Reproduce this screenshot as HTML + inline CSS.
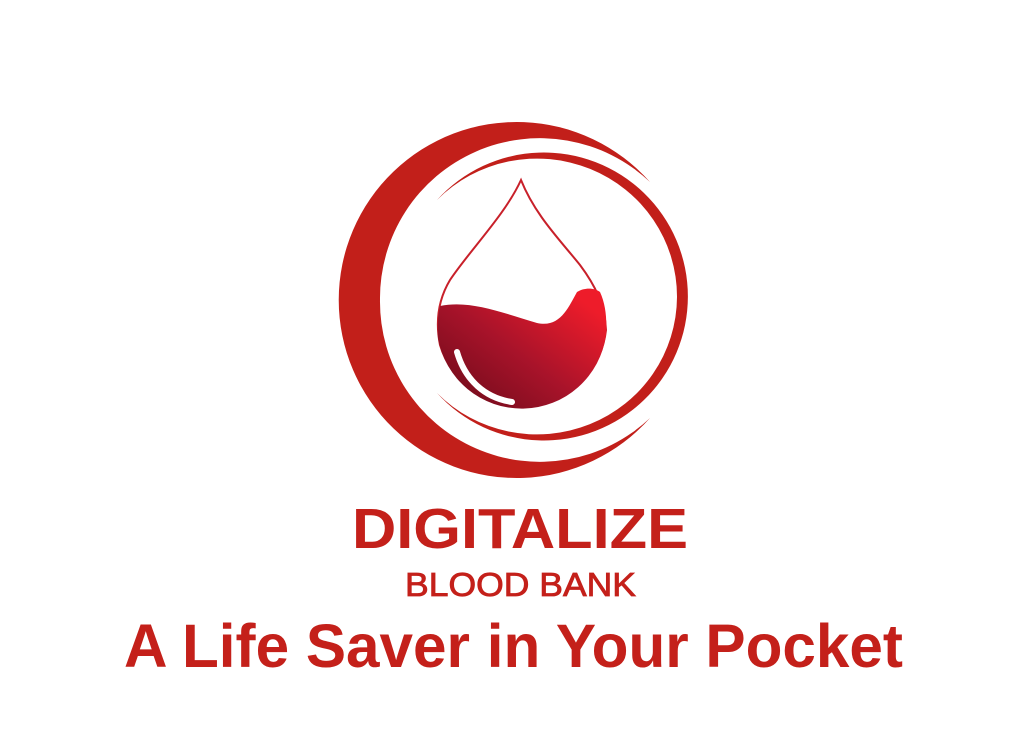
<!DOCTYPE html>
<html><head><meta charset="utf-8"><style>
html,body{margin:0;padding:0;background:#fff;width:1030px;height:750px;overflow:hidden}
svg{display:block}
</style></head><body>
<svg width="1030" height="750" viewBox="0 0 1030 750" xmlns="http://www.w3.org/2000/svg">
<defs>
<linearGradient id="g" x1="0.1" y1="1" x2="0.95" y2="0.2">
<stop offset="0" stop-color="#6e0b1a"/>
<stop offset="0.5" stop-color="#a8132a"/>
<stop offset="1" stop-color="#ee1c2a"/>
</linearGradient>
</defs>
<path d="M650,182 A178,178 0 1 0 650,418 A160,160 0 0 1 380,300 A160,160 0 0 1 650,182 Z" fill="#c21f1a"/>
<path d="M437,200 A144,144 0 1 1 437,393 A140,138 0 0 0 677,297 A140,138 0 0 0 437,200 Z" fill="#c21f1a"/>
<path d="M521,180 C505,215 470,250 450,280 C435,305 437,330 440,345 A85,85 0 0 0 606,330 C605,305 595,285 580,265 C560,240 535,215 521,180 Z" fill="#fff" stroke="#c8202a" stroke-width="2"/>
<path d="M440,306 C470,300 500,312 537,323 C560,328 568,308 577,292 C585,287 595,288 600,292 C606,305 607,320 606,335 A85,85 0 0 1 438,338 C437,325 438,315 440,306 Z" fill="url(#g)"/>
<path d="M457,352 C465,380 485,398 512,402" fill="none" stroke="#fff" stroke-width="6" stroke-linecap="round"/>
<g font-family="Liberation Sans, sans-serif" fill="#c4201a">
<text x="352" y="548" font-size="57" font-weight="bold" textLength="336" lengthAdjust="spacingAndGlyphs">DIGITALIZE</text>
<text x="405" y="596" font-size="33" stroke="#c4201a" stroke-width="0.8" textLength="231" lengthAdjust="spacingAndGlyphs">BLOOD BANK</text>
<text x="124" y="667" font-size="61" font-weight="bold" textLength="779" lengthAdjust="spacingAndGlyphs">A Life Saver in Your Pocket</text>
</g>
</svg>
</body></html>
